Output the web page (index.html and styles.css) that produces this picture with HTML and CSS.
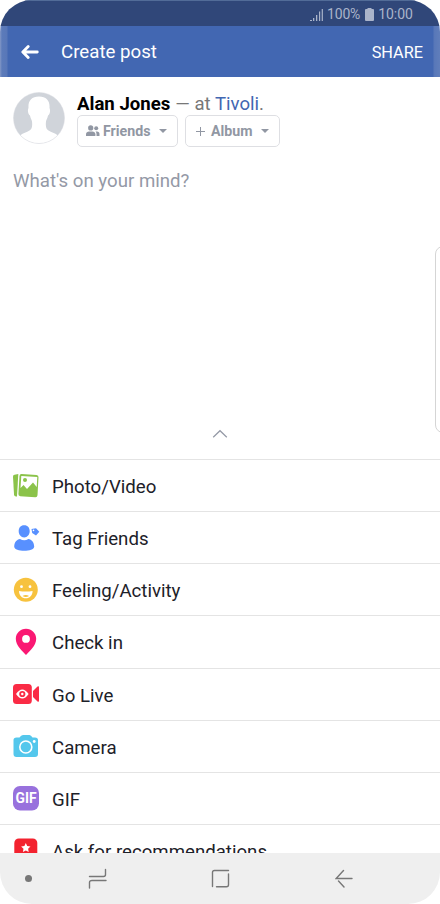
FILE: index.html
```html
<!DOCTYPE html>
<html lang="en">
<head>
<meta charset="utf-8">
<title>Create post</title>
<link rel="stylesheet" href="styles.css">
</head>
<body>
<main class="phone">
  <div class="status">
    <svg class="signal" width="13" height="13" viewBox="0 0 13 13"><path d="M0 13h2v-1H0zM3 13h1.300v-3H3zM6 13h1.300V7H6zM9 13h1.200V3.500H9zM11.700 13h1.200V1h-1.200z"/></svg>
    <span class="percent">100%</span>
    <svg class="battery" width="9" height="13" viewBox="0 0 9 13"><path d="M2.500 0h4v1H8q1 0 1 1v10q0 1-1 1H1q-1 0-1-1V2q0-1 1-1h1.500z"/></svg>
    <span class="time">10:00</span>
  </div>
  <header class="appbar">
    <svg class="back" width="18" height="14" viewBox="0 0 18 14"><path d="M7.200 1.500 1.800 7l5.400 5.500M2.500 7h13.800"/></svg>
    <h1 class="title">Create post</h1>
    <span class="share">SHARE</span>
  </header>
  <section class="composer">
    <div class="author">
      <svg class="avatar" width="52" height="52" viewBox="0 0 52 52"><defs><clipPath id="face"><circle cx="26" cy="26" r="25.500"/></clipPath></defs><g clip-path="url(#face)"><path fill="#d0d4da" d="M0 0h52v52H0z"/><path fill="#fff" d="M26 4.500c-7.500 0-11 4.500-10.500 11 0 1-.8 2-.5 4 .2 2 1 3.500 2 4 .5 3 1.800 4.500 2 6 .5 5 0 7.500-2.500 9-3 2-6 2-9.500 5V53h38v-9.500c-3.500-3-6.500-3-9.500-5-2.500-1.500-3-4-2.500-9 .2-1.500 1.500-3 2-6 1-.5 1.800-2 2-4 .3-2-.5-3-.5-4 .5-6.500-3-11-10.500-11z"/></g><circle cx="26" cy="26" r="25.500" fill="none" stroke="#d8dbe0" stroke-width=".5"/></svg>
      <div class="details">
        <p class="byline"><b class="name">Alan Jones</b><span class="at">— at <a class="place">Tivoli</a>.</span></p>
        <div class="chips">
          <span class="chip friends"><svg width="14" height="12" viewBox="0 0 14 12"><circle cx="4.700" cy="2.900" r="2.600"/><path d="M0 11V9.300C0 7.500 1.500 6.600 3 6.600h3.400c1.500 0 3 .9 3 2.700V11z"/><circle cx="10.200" cy="3.300" r="2"/><path d="M9.500 6.600H11c1.600 0 2.500 1 2.500 2.500V11h-3V9c0-1-.4-1.800-1-2.400z"/></svg><b>Friends</b><i class="caret"></i></span>
          <span class="chip album"><svg width="9" height="9" viewBox="0 0 9 9"><path d="M4 0h1v4h4v1H5v4H4V5H0V4h4z"/></svg><b>Album</b><i class="caret"></i></span>
        </div>
      </div>
    </div>
    <p class="prompt">What's on your mind?</p>
    <svg class="expand" width="16" height="10" viewBox="0 0 16 10"><path d="M1.200 8.300 8 1.700l6.800 6.600"/></svg>
    <div class="edge-handle"></div>
  </section>
  <ul class="options">
    <li class="option"><svg class="icon" width="28" height="28" viewBox="0 0 28 28"><path fill="#8bc34a" d="M1 4.500Q1 3 2.500 2.700L6.300 2 5 24.500H4q-1.800 0-2-2z"/><path fill="#8bc34a" fill-rule="evenodd" d="m9.500 2 15 1q2.200.2 2 2.300l-1 18q-.2 2-2.200 1.900l-15-1q-2-.2-1.900-2.200L7.500 4q.2-2.100 2-2zM9.300 4 8.500 16l3-3 3.500 4 6-6.500 3.700 4.500.6-10z"/><circle cx="13" cy="8" r="2" fill="#8bc34a"/></svg><span class="label photo">Photo/Video</span></li>
    <li class="option"><svg class="icon" width="28" height="28" viewBox="0 0 28 28"><path fill="#5890ff" d="M12.200 1.300c3.700 0 5.500 2.600 5.500 6 0 3.300-2.300 6.200-5.500 6.200s-5.500-2.900-5.500-6.200c0-3.400 1.800-6 5.500-6zM8 15q4.200 2.400 8.400 0c3.200.5 5.600 3 5.800 7.500 0 3-5 4.200-10 4.200s-10-1.200-10-4.200C2.400 18 4.800 15.500 8 15z"/><path fill="#5890ff" fill-rule="evenodd" d="m19.500 5 4.500-.8 3.300 3.600-3.300 3.700-3.800-2.500zM21.500 5.600a.8.800 0 1 0 0 1.600.8.800 0 0 0 0-1.600z"/></svg><span class="label tag">Tag Friends</span></li>
    <li class="option"><svg class="icon" width="28" height="28" viewBox="0 0 28 28"><circle cx="13.800" cy="13.800" r="12" fill="#f7c23e"/><circle cx="9.500" cy="10.700" r="1.400" fill="#fff"/><circle cx="18" cy="10.700" r="1.400" fill="#fff"/><path fill="#fff" d="M7 15q6.800 1 13.600 0c0 4.500-3 7.300-6.800 7.300S7 19.500 7 15z"/><path fill="#f7c23e" d="M10.500 20q3.300-2 6.600 0-3.300 2-6.600 0z"/></svg><span class="label feeling">Feeling/Activity</span></li>
    <li class="option"><svg class="icon" width="28" height="28" viewBox="0 0 28 28"><path fill="#fa1873" fill-rule="evenodd" d="M14 .8c5.700 0 10.200 4.400 10.200 10C24.200 18 17.500 23 14 27 10.500 23 3.800 18 3.800 10.800 3.800 5.200 8.300.8 14 .8zm0 6.200a3.900 3.900 0 1 0 0 7.800A3.900 3.900 0 0 0 14 7z"/></svg><span class="label checkin">Check in</span></li>
    <li class="option"><svg class="icon" width="28" height="28" viewBox="0 0 28 28"><rect x="1" y="3" width="18.800" height="20" rx="3.500" fill="#fa2b45"/><path fill="#fa2b45" d="m21 10 4.500-4.500q1.500-1 1.500.7v13.600q0 1.700-1.500.7L21 16z"/><path fill="#fff" d="M4 13q6.300-9 12.600 0-6.300 9-12.600 0z"/><circle cx="10.300" cy="13" r="3.100" fill="#fa2b45"/><circle cx="10.300" cy="13" r="1.200" fill="#fff"/></svg><span class="label live">Go Live</span></li>
    <li class="option"><svg class="icon" width="28" height="28" viewBox="0 0 28 28"><path fill="#54c7ec" d="M7.500 4.500Q9 2 11 2h6.500q1.500 0 3 2.500H23Q26 4.500 26 7v14q0 3-3 3H4.500q-3 0-3-3V7q0-2.500 3-2.500z"/><circle cx="13.800" cy="14" r="6" fill="none" stroke="#fff" stroke-width="1.600"/><circle cx="22.200" cy="8.500" r="1.400" fill="#fff"/></svg><span class="label camera">Camera</span></li>
    <li class="option"><svg class="icon" width="28" height="28" viewBox="0 0 28 28"><rect x="1" y="1" width="26" height="24.500" rx="7" fill="#9871dd"/><text class="gif-mark" x="14" y="18.300" text-anchor="middle" textLength="21" lengthAdjust="spacingAndGlyphs">GIF</text></svg><span class="label gif">GIF</span></li>
    <li class="option"><svg class="icon" width="28" height="28" viewBox="0 0 28 28"><rect x="2.300" y="1.500" width="23" height="24" rx="4.500" fill="#f3222f"/><path fill="#fff" d="m13.800 6 1.400 3 3.300.4-2.400 2.300.6 3.300-2.900-1.600-2.900 1.600.6-3.300-2.400-2.300 3.300-.4z"/></svg><span class="label recommend">Ask for recommendations</span></li>
  </ul>
  <nav class="navbar">
    <i class="dot"></i>
    <svg class="recents" width="20" height="22" viewBox="0 0 20 22"><path d="M1.500 8.500h14q2 0 2-2v-5M18 12.500H4q-2.500 0-2.500 2V20"/></svg>
    <svg class="home" width="20" height="20" viewBox="0 0 20 20"><path d="M17.500 1.500h-14q-2 0-2 2v14M5.500 17.800h10q2 0 2-2V5"/></svg>
    <svg class="nav-back" width="18" height="20" viewBox="0 0 18 20"><path d="M8.500 1.500 1.200 9.500H17M3.500 12l5.500 6"/></svg>
  </nav>
</main>
</body>
</html>
```

FILE: styles.css
```css
* { box-sizing: border-box; }
body { margin: 0; background: #fff; font-family: Roboto, "Liberation Sans", sans-serif; }
p, h1, ul { margin: 0; padding: 0; }
svg { display: block; flex: none; }
.phone { width: 440px; height: 904px; display: flex; flex-direction: column; overflow: hidden; border-radius: 32px; background: #fff; white-space: nowrap; }
.status { flex: none; height: 26px; display: flex; align-items: center; padding: 1px 27px 0 0; justify-content: flex-end; background: #304779; border-top: 1px solid #526c98; color: #aab4ca; font-size: 14px; }
.status svg { fill: #aab4ca; }
.percent { margin: 0 5px 0 4px; letter-spacing: -.2px; }
.time { margin-left: 4px; }
.appbar { flex: none; height: 51px; display: flex; align-items: center; padding: 0 17px 0 21px; color: #fff; background: linear-gradient(90deg, #8297c6 0, #5c7bba 2px, #5877b8 7px, #4267b2 8px, #4267b2 433px, #5877b8 434px, #607ebb 440px); }
.back { fill: none; stroke: #fff; stroke-width: 2.800; stroke-linecap: round; stroke-linejoin: round; }
.title { margin-left: 22px; padding-top: 1px; font-size: 18.700px; font-weight: 400; }
.share { margin-left: auto; padding-top: 1px; font-size: 16.300px; }
.composer { flex: none; position: relative; height: 382px; padding: 14px 13px 0; }
.author { display: flex; gap: 12px; }
.avatar { margin-left: -.5px; margin-top: 1px; }
.details { padding-top: 2px; margin-left: .5px; }
.byline { display: flex; gap: 5px; height: 22px; line-height: 22px; font-size: 18.600px; }
.name { color: #000; }
.at { color: #777; }
.place { color: #4267b2; }
.chips { display: flex; gap: 7px; }
.chip { height: 32px; display: flex; align-items: center; border: 1px solid #dedfe3; border-radius: 5px; color: #9197a3; font-size: 14.200px; }
.chip svg { fill: #9197a3; }
.friends { width: 101px; padding-left: 8px; gap: 3px; }
.album { width: 95px; padding-left: 10px; gap: 6px; }
.caret { width: 0; height: 0; margin: 0 10px 0 auto; border: 4.500px solid transparent; border-top-color: #9197a3; border-bottom: 0; }
.prompt { margin-top: 22px; line-height: 24px; font-size: 18.650px; color: #9499a6; }
.expand { position: absolute; left: 212px; bottom: 20px; fill: none; stroke: #9499a6; stroke-width: 1.200; }
.edge-handle { position: absolute; left: 435px; top: 169px; width: 20px; height: 187px; border: 1px solid #d5d5d5; border-radius: 8px; }
.options { flex: 1; min-height: 0; overflow: hidden; list-style: none; }
.option { height: 52.140px; display: flex; align-items: center; padding: 1px 0 0 12px; border-top: 1px solid #e4e4e4; color: #1d2129; font-size: 18.650px; }
.label { margin-left: 12px; padding-top: 2px; }
.gif-mark { font: 700 14px Roboto, sans-serif; fill: #fff; }
.navbar { flex: none; height: 51px; display: flex; align-items: center; padding-left: 25px; background: #efefef; }
.navbar svg { fill: none; stroke: #777; stroke-width: 1.400; stroke-linecap: round; }
.dot { width: 7px; height: 7px; border-radius: 50%; background: #777; }
.recents { margin-left: 56px; }
.home { margin-left: 103px; }
.nav-back { margin-left: 104px; }
```
